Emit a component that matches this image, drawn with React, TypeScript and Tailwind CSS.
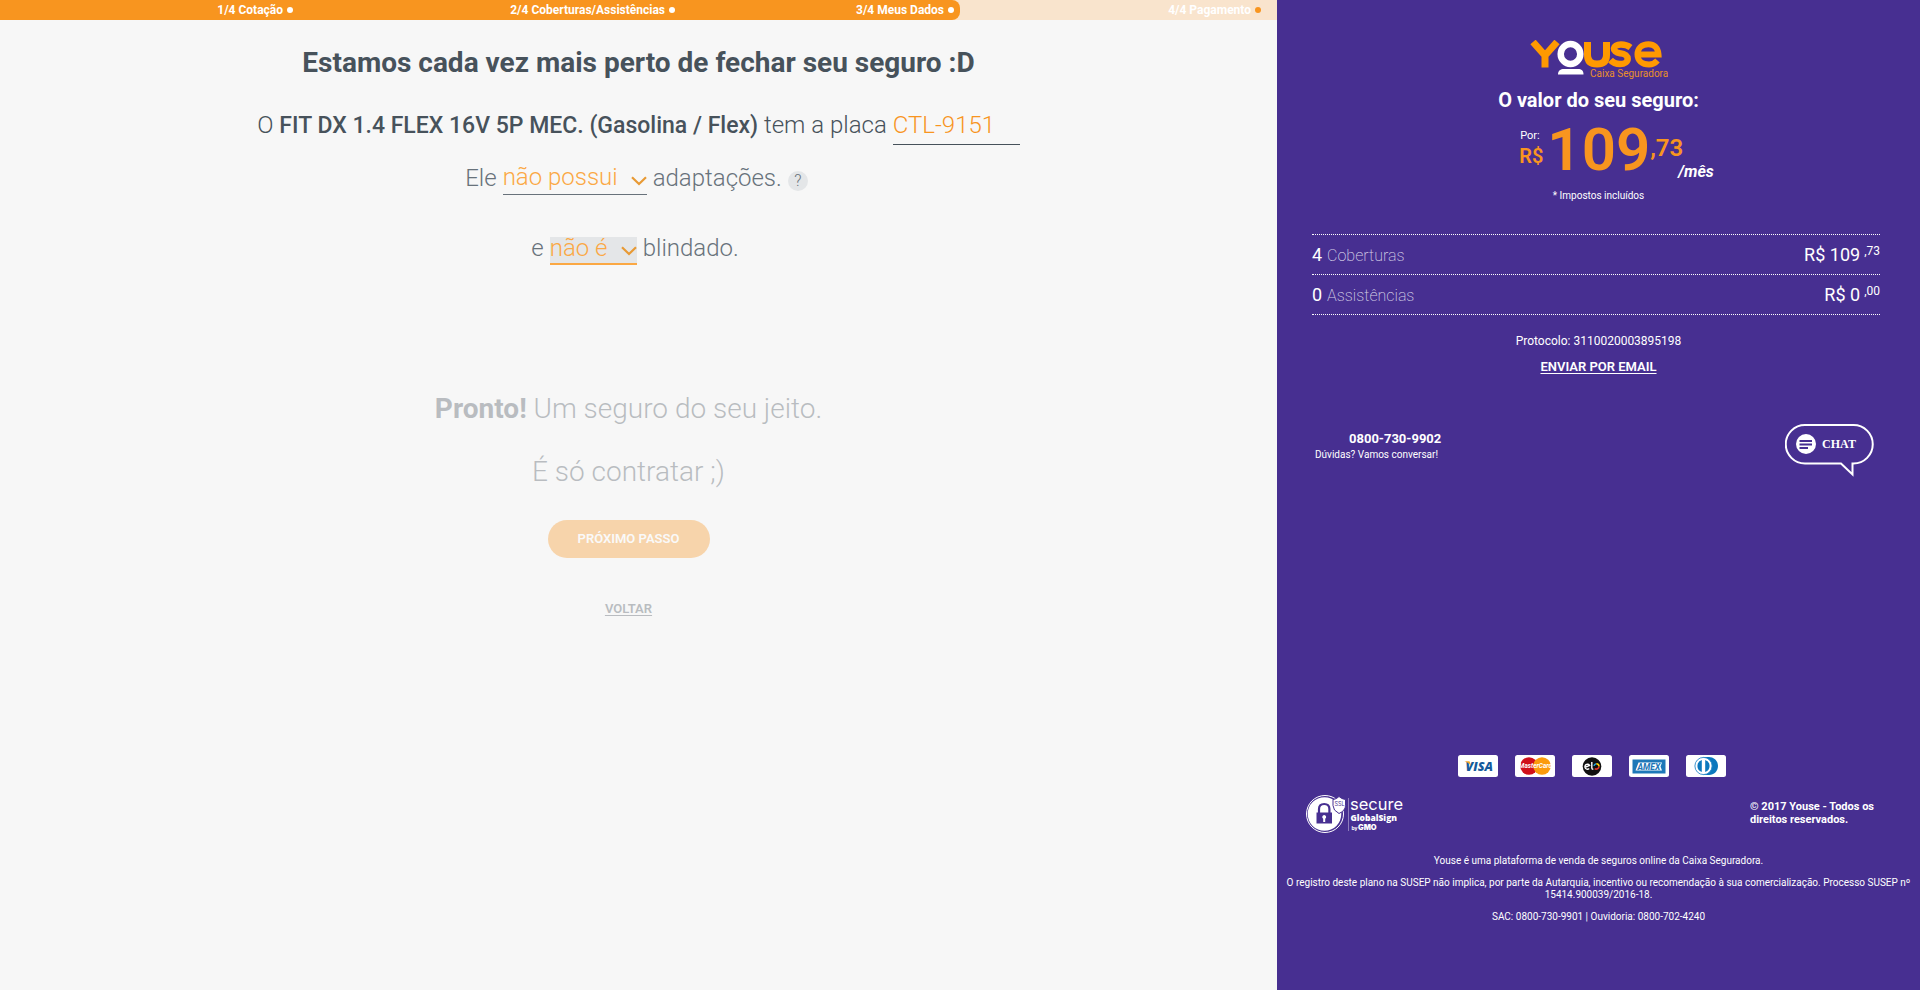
import type { ReactNode } from "react";

function ProgressBar() {
  return (
    <nav aria-label="Etapas" className="h-5 bg-[#f9e4cd] text-xs leading-5 font-bold text-white">
      <ol className="grid h-full grid-cols-[299fr_382fr_279fr_317fr]">
        <li className="bg-[#f8951f] pr-1.5 text-right whitespace-nowrap">1/4 Cotação <Dot /></li>
        <li className="-ml-px bg-[#f8951f] pr-1.5 text-right whitespace-nowrap">2/4 Coberturas/Assistências <Dot /></li>
        <li className="-ml-px rounded-r-lg bg-[#f8951f] pr-1.5 text-right whitespace-nowrap">3/4 Meus Dados <Dot /></li>
        <li className="pr-4 text-right whitespace-nowrap">4/4 Pagamento <Dot active /></li>
      </ol>
    </nav>
  );
}

function Dot({ active = false }: { active?: boolean }) {
  return (
    <span className={active ? "ml-px inline-block size-[6px] rounded-full bg-[#f8951f] align-[1px]" : "ml-px inline-block size-[6px] rounded-full bg-white align-[1px]"} />
  );
}

function Chevron() {
  return (
    <svg viewBox="0 0 16 10" className="pointer-events-none absolute right-0 bottom-[9px] h-[10px] w-4" fill="none" stroke="#e89a35" strokeWidth="2.2">
      <path d="M1 1.2 8 8l7-6.8" />
    </svg>
  );
}

function YouseLogo() {
  return (
    <svg viewBox="0 0 138 42" className="h-[42px] w-[138px]" role="img" aria-label="Youse Caixa Seguradora">
      <g fill="none" stroke="#f90" strokeWidth="7">
        <path d="M3 2 15 15.500 27 2M15 14v13.500" />
        <path d="M57.500 2v13q0 9 9.500 9t9.500-9V2" />
        <path d="M100.500 7.500Q96.500 4.500 91 4.500c-9 0-9.500 7.500-1 8.700 10.500 1 10 10.800 0 10.800q-6 0-9.500-4" strokeWidth="6.500" />
        <path d="M106.500 14.500h22C128 7 123.500 4.300 118.500 4.300c-7 0-11 4.400-11 10.200s4.500 10 11.500 10q5 0 8.500-4" strokeWidth="6" />
      </g>
      <ellipse cx="40.500" cy="14" rx="9.800" ry="10" fill="none" stroke="#fff" strokeWidth="6.500" />
      <path d="M28 34.500c0-4 2.500-5.500 6-5.500h14c3.500 0 5.500 1.500 5.500 5.500z" fill="#fff" />
      <text x="60" y="37" fill="#e98f2b" fontSize="10" fontFamily="Roboto, sans-serif">Caixa Seguradora</text>
    </svg>
  );
}

function SecureSeal() {
  return (
    <svg viewBox="0 0 100 40" className="h-10 w-[100px]" role="img" aria-label="SSL secure GlobalSign by GMO">
      <circle cx="20" cy="20" r="18.500" fill="none" stroke="#fff" strokeWidth="1" />
      <circle cx="19.500" cy="20" r="16.800" fill="#fff" />
      <path d="M28 5.500q4-.5 6-3 2.500 2.500 6.500 3v6q0 5-6.500 8-6-3-6-8z" fill="#fff" stroke="#472f91" strokeWidth="1" />
      <path d="M14 19v-4q0-5 5.200-5t5.200 5v4" fill="none" stroke="#472f91" strokeWidth="2.200" />
      <path d="M11.500 18.500h15.500v11H11.500z" fill="#472f91" />
      <path d="M19.200 21a2 2 0 0 1 1 3.700V28h-2v-3.300a2 2 0 0 1 1-3.700" fill="#fff" />
      <path d="M43.500 4v33" stroke="#8d7cbc" strokeWidth="1" />
      <g fill="#fff" fontFamily="Inter, sans-serif">
        <text x="29.500" y="11.500" fontSize="5.500" fill="#472f91">SSL</text>
        <text x="45" y="16" fontSize="16.500">secure</text>
        <text x="45.500" y="26.500" fontSize="8.500" fontWeight="800" fontFamily="'Open Sans', sans-serif">GlobalSign</text>
        <text x="46.500" y="35.500" fontSize="5" fontWeight="700">by</text>
        <text x="53" y="35.500" fontSize="7.500" fontWeight="900">GMO</text>
      </g>
    </svg>
  );
}

function PaymentCard({ label, children }: { label: string; children: ReactNode }) {
  return (
    <li>
      <svg viewBox="0 0 40 22" className="h-[22px] w-10" role="img" aria-label={label}>
        <rect width="40" height="22" rx="2.500" fill="#fff" />
        {children}
      </svg>
    </li>
  );
}

function PaymentCards() {
  return (
    <ul className="flex justify-center gap-[17px]">
      <PaymentCard label="Visa">
        <text x="7.500" y="15.500" fontFamily="Open Sans, sans-serif" fontSize="12.500" fontWeight="800" fontStyle="italic" fill="#155a9c">VISA</text>
        <path d="M6.500 6.300h5l1.600 4.700q-2-3.300-6.600-4.700" fill="#f5a623" />
      </PaymentCard>
      <PaymentCard label="MasterCard">
        <circle cx="14" cy="11" r="8.800" fill="#d0101b" />
        <circle cx="27" cy="11" r="8.800" fill="#fb9b0c" />
        <text x="20.500" y="13.200" textAnchor="middle" fontFamily="Roboto, sans-serif" fontSize="6.500" fontWeight="700" fontStyle="italic" fill="#fff">MasterCard</text>
      </PaymentCard>
      <PaymentCard label="Elo">
        <circle cx="20" cy="11.500" r="9.300" fill="#111" />
        <path d="M13 12.300 17.600 10.500a2.500 2.500 0 1 0-.4 3M19.800 7v6q0 1.300 1.500 1.300" fill="none" stroke="#fff" strokeWidth="1.400" />
        <path d="M22 11a2.700 2.700 0 0 1 2.300-2.300" fill="none" stroke="#1b9ddb" strokeWidth="1.600" />
        <path d="M24.300 8.700a2.800 2.800 0 0 1 2.700 2.800" fill="none" stroke="#ffd200" strokeWidth="1.600" />
        <path d="M27 11.500a2.800 2.800 0 0 1-4.300 2.200" fill="none" stroke="#e83429" strokeWidth="1.600" />
      </PaymentCard>
      <PaymentCard label="American Express">
        <rect x="3.500" y="4.500" width="33" height="14" fill="#1e78b8" />
        <path d="M9.500 7.500H33l-1.500 4 1.500 4H6.500z" fill="#fff" />
        <text x="19.800" y="14.500" textAnchor="middle" fontFamily="Roboto, sans-serif" fontSize="8.500" fontWeight="800" fontStyle="italic" fill="#1e78b8">AMEX</text>
      </PaymentCard>
      <PaymentCard label="Diners Club">
        <path d="M17 2h6c5 0 9 4 9 9s-4 9-9 9h-6z" fill="#0b78bd" />
        <circle cx="17.500" cy="11" r="8.600" fill="#fff" stroke="#2b8ac9" strokeWidth=".9" />
        <path d="M15.800 5v12a6.300 6.300 0 0 1 0-12M19.200 5v12a6.300 6.300 0 0 0 0-12" fill="#0b78bd" />
      </PaymentCard>
    </ul>
  );
}

function ChatButton() {
  return (
    <button type="button" className="relative h-[54px] w-[90px] text-white">
      <svg viewBox="0 0 90 54" className="absolute inset-0 size-full" fill="none">
        <path d="M20 2h48.500a19 19 0 0 1 0 38.500H67.500V51.500L56 40.500H20A19 19 0 0 1 20 2z" stroke="#fff" strokeWidth="2" />
        <circle cx="21" cy="21" r="10" fill="#fff" />
        <path d="M14.500 18H27M14.500 21.500H27M14.500 25h8.500" stroke="#472f91" strokeWidth="2" />
      </svg>
      <span className="relative block pb-3 pl-[18px] font-['Liberation_Serif',serif] text-xs font-bold">CHAT</span>
    </button>
  );
}

function SummaryRow({ count, label, whole, cents }: { count: string; label: string; whole: string; cents: string }) {
  return (
    <div className="flex h-10 items-center justify-between border-b border-dotted border-white">
      <dt className="text-base">
        <span className="text-lg">{count}</span> <span className="ml-px font-extralight text-[#d5cfe6]">{label}</span>
      </dt>
      <dd className="flex items-start gap-1 text-lg leading-6">
        {whole}<span className="text-xs leading-4">,{cents}</span>
      </dd>
    </div>
  );
}

function Quote() {
  return (
    <main className="grow basis-0 lg:grow-[1277]">
      <ProgressBar />
      <form className="text-center text-[#47525b]" onSubmit={(e) => e.preventDefault()}>
        <h1 className="mt-6 text-[28px] leading-[38px] font-bold">Estamos cada vez mais perto de fechar seu seguro :D</h1>
        <div className="mt-6 flex items-end justify-center gap-[6px] text-2xl leading-[38px] font-light">
          <label htmlFor="plate">
            O <span className="text-[23px] font-medium">FIT DX 1.4 FLEX 16V 5P MEC. (Gasolina / Flex)</span> tem a placa
          </label>
          <input id="plate" defaultValue="CTL-9151" className="h-[39px] w-[127px] border-b border-[#47525b] bg-transparent text-[#f8951f] outline-none" />
        </div>
        <div className="mt-3 mr-1 flex items-end justify-center gap-[6px] text-2xl leading-[34px] font-light text-[#68727b]">
          <label htmlFor="adapt">Ele</label>
          <span className="relative">
            <select id="adapt" defaultValue="no" className="block h-[38px] w-36 appearance-none border-b border-[#68727b] bg-transparent pt-[3px] text-[#fba844] outline-none">
              <option value="no">não possui</option>
              <option value="yes">possui</option>
            </select>
            <Chevron />
          </span>
          <span>adaptações.</span>
          <button type="button" aria-label="Ajuda" className="mb-1 size-5 rounded-full bg-[#e4e6e8] text-base leading-5 font-light">?</button>
        </div>
        <div className="mt-9 mr-[7px] flex items-end justify-center gap-[6px] text-2xl leading-[34px] font-light text-[#68727b]">
          <label htmlFor="armor">e</label>
          <span className="relative">
            <select id="armor" defaultValue="no" className="block h-7 w-[87px] appearance-none border-b-2 border-[#fba844] bg-[#e4e6e8] pb-1 leading-[22px] text-[#fba844] outline-none">
              <option value="no">não é</option>
              <option value="yes">é</option>
            </select>
            <Chevron />
          </span>
          <span>blindado.</span>
        </div>
        <div className="mt-28 mr-5 flex flex-col items-center opacity-35">
          <p className="text-[28px] leading-[63px] font-light">
            <strong className="font-bold">Pronto!</strong> Um seguro do seu jeito.<br />
            É só contratar ;)
          </p>
          <button type="submit" className="mt-[17px] h-[38px] w-[162px] rounded-full bg-[#f8951f] text-[13px] font-semibold text-white">PRÓXIMO PASSO</button>
          <a href="#voltar" className="mt-[39px] text-[13px] leading-6 font-semibold underline underline-offset-2">VOLTAR</a>
        </div>
      </form>
    </main>
  );
}

function Sidebar() {
  return (
    <aside className="flex flex-col bg-[#472f91] text-white lg:grow-[643] lg:basis-0">
      <div className="mt-10 flex justify-center"><YouseLogo /></div>
      <h2 className="mt-[6px] text-center text-xl leading-6 font-bold">O valor do seu seguro:</h2>
      <div className="mt-1 ml-9 flex justify-center text-[#f8951f]">
        <div className="mt-3 mr-1 text-left">
          <div className="ml-px text-[11px] leading-4 text-white">Por:</div>
          <div className="text-xl leading-6 font-semibold">R$</div>
        </div>
        <div className="text-[60px] leading-[68px] font-semibold">109</div>
        <div className="pt-5">
          <div className="text-2xl leading-6 font-semibold">,73</div>
          <div className="pl-7 text-base leading-6 font-bold text-white italic">/mês</div>
        </div>
      </div>
      <p className="mt-1 text-center text-[10px] leading-4">* Impostos incluídos</p>
      <dl className="mx-[35px] mt-[30px] border-t border-dotted border-white lg:mr-10">
        <SummaryRow count="4" label="Coberturas" whole="R$ 109" cents="73" />
        <SummaryRow count="0" label="Assistências" whole="R$ 0" cents="00" />
      </dl>
      <p className="mt-[18px] text-center text-xs leading-4">Protocolo: 3110020003895198</p>
      <a href="#email" className="mt-2 self-center text-[13px] leading-5 font-semibold underline underline-offset-2">ENVIAR POR EMAIL</a>
      <div className="mt-[46px] mr-[45px] ml-[38px] flex items-start justify-between">
        <div className="mt-2">
          <a href="tel:08007309902" className="block pl-[34px] text-[13px] leading-4 font-bold">0800-730-9902</a>
          <p className="text-[10px] leading-4">Dúvidas? Vamos conversar!</p>
        </div>
        <ChatButton />
      </div>
      <div className="mt-auto mr-[14px] pt-8"><PaymentCards /></div>
      <div className="mt-[17px] mr-[46px] ml-7 flex items-center justify-between">
        <SecureSeal />
        <p className="pb-[2px] text-[11px] leading-[13px] font-bold">© 2017 Youse - Todos os<br />direitos reservados.</p>
      </div>
      <div className="mt-[21px] mb-[67px] space-y-[10px] px-2 text-center text-[10px] leading-3">
        <p>Youse é uma plataforma de venda de seguros online da Caixa Seguradora.</p>
        <p>O registro deste plano na SUSEP não implica, por parte da Autarquia, incentivo ou recomendação à sua comercialização. Processo SUSEP nº 15414.900039/2016-18.</p>
        <p>SAC: 0800-730-9901 | Ouvidoria: 0800-702-4240</p>
      </div>
    </aside>
  );
}

export default function App() {
  return (
    <div className="flex min-h-screen flex-col bg-[#f7f7f7] font-[Roboto,sans-serif] lg:flex-row">
      <Quote />
      <Sidebar />
    </div>
  );
}
